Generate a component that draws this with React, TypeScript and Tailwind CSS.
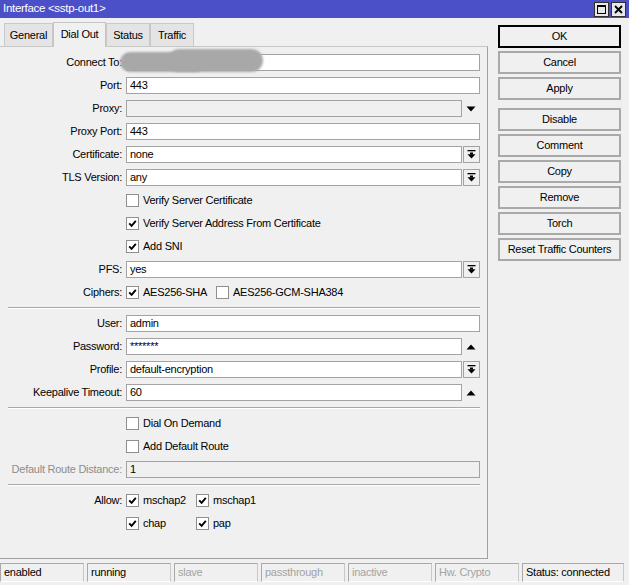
import React from 'react';

function Check({ checked }: { checked?: boolean }) {
  return (
    <span className="w-[13px] h-[13px] border border-[#8f8f8f] bg-white flex items-center justify-center shrink-0">
      {checked && (
        <svg width="9" height="9" viewBox="0 0 9 9">
          <path d="M1.2 4.4 L3.6 6.8 L7.8 1.8" stroke="#000" strokeWidth="1.9" fill="none" />
        </svg>
      )}
    </span>
  );
}

function Row({ label, dim, children }: { label?: string; dim?: boolean; children?: React.ReactNode }) {
  return (
    <div className="flex h-[17px] items-center">
      <div className={dim ? 'w-[122px] text-right text-[#8d8d8d] whitespace-nowrap' : 'w-[122px] text-right text-black whitespace-nowrap'}>
        {label}
      </div>
      <div className="ml-[4px] flex w-[354px] h-full items-center">{children}</div>
    </div>
  );
}

function Box({ value, disabled, className }: { value?: string; disabled?: boolean; className?: string }) {
  return (
    <div
      className={
        (disabled ? 'bg-[#f0f0f0] ' : 'bg-white ') +
        'h-[17px] border border-[#a3a3a3] px-[3px] leading-[15px] whitespace-nowrap overflow-hidden ' +
        (className ?? 'flex-1')
      }
    >
      {value}
    </div>
  );
}

function DropIcon() {
  return (
    <svg width="9" height="9" viewBox="0 0 9 9">
      <rect x="0.5" y="0" width="8" height="1.3" fill="#000" />
      <rect x="3" y="2.5" width="3" height="2" fill="#000" />
      <path d="M0.5 4.2 H8.5 L4.5 8.4 Z" fill="#000" />
    </svg>
  );
}

function Combo({ value }: { value: string }) {
  return (
    <>
      <Box value={value} />
      <div className="ml-[1px] w-[17px] h-[17px] border border-[#a3a3a3] bg-[#f0f0f0] flex items-center justify-center">
        <DropIcon />
      </div>
    </>
  );
}

function Tri({ up, value, disabled }: { up?: boolean; value?: string; disabled?: boolean }) {
  return (
    <>
      <Box value={value} disabled={disabled} className="w-[336px]" />
      <div className="w-[18px] h-[17px] flex items-center justify-center">
        <svg width="10" height="6" viewBox="0 0 10 6">
          {up ? <path d="M0.5 5.5 H9.5 L5 0.5 Z" fill="#000" /> : <path d="M0.5 0.5 H9.5 L5 5.5 Z" fill="#000" />}
        </svg>
      </div>
    </>
  );
}

function CheckText({ checked, text, className }: { checked?: boolean; text: string; className?: string }) {
  return (
    <div className={'flex items-center ' + (className ?? '')}>
      <Check checked={checked} />
      <span className="ml-[4px] whitespace-nowrap">{text}</span>
    </div>
  );
}

function Separator() {
  return <div className="my-[6px] ml-[8px] mr-[7px] h-[2px] border-t border-[#a8a8a8] border-b border-b-white" />;
}

function Btn({ children, primary, className }: { children: React.ReactNode; primary?: boolean; className?: string }) {
  return (
    <div
      className={
        (primary ? 'border-2 border-black ' : 'border-2 border-[#a9a9a9] ') +
        'h-[23px] w-[123px] flex items-center justify-center bg-[#f0f0f0] ' +
        (className ?? '')
      }
    >
      {children}
    </div>
  );
}

function Tab({ label, active, w }: { label: string; active?: boolean; w: string }) {
  return (
    <div
      className={
        active
          ? 'h-[25px] relative z-10 -mb-px bg-[#f0f0f0] border border-b-0 border-[#c4c4c4] flex items-center justify-center pb-[2px] ' + w
          : 'h-[23px] bg-[#e4e4e4] border border-b-0 border-[#c9c9c9] flex items-center justify-center ' + w
      }
    >
      {label}
    </div>
  );
}

function StatusCell({ text, dim, w }: { text: string; dim?: boolean; w: string }) {
  return (
    <div
      className={
        'h-[19px] border border-[#a8a8a8] border-b-white border-r-[#c8c8c8] pl-[3px] leading-[17px] whitespace-nowrap ' +
        (dim ? 'text-[#a3a3a3] ' : 'text-black ') +
        w
      }
    >
      {text}
    </div>
  );
}

export default function App() {
  return (
    <div className="w-[629px] h-[585px] bg-[#f0f0f0] flex flex-col text-[11px] tracking-[-0.25px] text-black font-['Liberation_Sans',Arial,sans-serif] overflow-hidden">
      {/* Title bar */}
      <div className="h-[18px] bg-[#4b4fc8] flex items-center justify-between pl-[3px] pr-[3px]">
        <span className="text-white text-[11.5px] tracking-[-0.3px]">Interface &lt;sstp-out1&gt;</span>
        <div className="flex gap-[2px]">
          <div className="w-[15px] h-[15px] bg-[#e8e8e8] border border-[#303030] flex items-center justify-center">
            <svg width="9" height="9" viewBox="0 0 9 9">
              <rect x="0.5" y="0.5" width="8" height="8" fill="none" stroke="#000" />
              <rect x="0" y="0" width="9" height="2" fill="#000" />
            </svg>
          </div>
          <div className="w-[15px] h-[15px] bg-[#e8e8e8] border border-[#303030] flex items-center justify-center">
            <svg width="9" height="9" viewBox="0 0 9 9">
              <path d="M1 1 L8 8 M8 1 L1 8" stroke="#000" strokeWidth="1.8" />
            </svg>
          </div>
        </div>
      </div>

      <div className="flex flex-1 min-h-0">
        {/* Left: tabs + panel */}
        <div className="w-[488px] flex flex-col">
          <div className="h-[28px] flex items-end pl-[4px]">
            <Tab label="General" w="w-[49px]" />
            <Tab label="Dial Out" active w="w-[53px]" />
            <Tab label="Status" w="w-[44px]" />
            <Tab label="Traffic" w="w-[44px]" />
          </div>
          <div className="relative flex-1 border-t border-t-[#c8c8c8] border-r border-r-[#a0a0a0] border-b border-b-[#a0a0a0] pt-[7px]">
            <div className="flex flex-col gap-[6px]">
              <Row label="Connect To:">
                <Box />
              </Row>
              <Row label="Port:">
                <Box value="443" />
              </Row>
              <Row label="Proxy:">
                <Tri disabled />
              </Row>
              <Row label="Proxy Port:">
                <Box value="443" />
              </Row>
              <Row label="Certificate:">
                <Combo value="none" />
              </Row>
              <Row label="TLS Version:">
                <Combo value="any" />
              </Row>
              <Row>
                <CheckText text="Verify Server Certificate" />
              </Row>
              <Row>
                <CheckText checked text="Verify Server Address From Certificate" />
              </Row>
              <Row>
                <CheckText checked text="Add SNI" />
              </Row>
              <Row label="PFS:">
                <Combo value="yes" />
              </Row>
              <Row label="Ciphers:">
                <CheckText checked text="AES256-SHA" className="w-[90px]" />
                <CheckText text="AES256-GCM-SHA384" />
              </Row>
            </div>
            <Separator />
            <div className="flex flex-col gap-[6px]">
              <Row label="User:">
                <Box value="admin" />
              </Row>
              <Row label="Password:">
                <Tri up value="*******" />
              </Row>
              <Row label="Profile:">
                <Combo value="default-encryption" />
              </Row>
              <Row label="Keepalive Timeout:">
                <Tri up value="60" />
              </Row>
            </div>
            <Separator />
            <div className="flex flex-col gap-[6px]">
              <Row>
                <CheckText text="Dial On Demand" />
              </Row>
              <Row>
                <CheckText text="Add Default Route" />
              </Row>
              <Row label="Default Route Distance:" dim>
                <Box value="1" disabled />
              </Row>
            </div>
            <Separator />
            <div className="flex flex-col gap-[6px]">
              <Row label="Allow:">
                <CheckText checked text="mschap2" className="w-[70px]" />
                <CheckText checked text="mschap1" />
              </Row>
              <Row>
                <CheckText checked text="chap" className="w-[70px]" />
                <CheckText checked text="pap" />
              </Row>
            </div>

            {/* blurred address */}
            <div className="absolute left-[120px] top-[5px] w-[86px] h-[20px] rounded-full bg-[#a8a8a8] blur-[1px]" />
            <div className="absolute left-[168px] top-[2px] w-[95px] h-[23px] rounded-full bg-[#a8a8a8] blur-[1px]" />
          </div>
        </div>

        {/* Right: buttons */}
        <div className="pl-[10px] pt-[7px] flex flex-col gap-[3px]">
          <Btn primary>OK</Btn>
          <Btn>Cancel</Btn>
          <Btn>Apply</Btn>
          <Btn className="mt-[5px]">Disable</Btn>
          <Btn>Comment</Btn>
          <Btn>Copy</Btn>
          <Btn>Remove</Btn>
          <Btn>Torch</Btn>
          <Btn>Reset Traffic Counters</Btn>
        </div>
      </div>

      {/* Status bar */}
      <div className="h-[26px] pt-[4px] flex gap-[3px]">
        <StatusCell text="enabled" w="w-[84px]" />
        <StatusCell text="running" w="w-[84px]" />
        <StatusCell text="slave" dim w="w-[84px]" />
        <StatusCell text="passthrough" dim w="w-[84px]" />
        <StatusCell text="inactive" dim w="w-[84px]" />
        <StatusCell text="Hw. Crypto" dim w="w-[84px]" />
        <StatusCell text="Status: connected" w="w-[102px]" />
      </div>
    </div>
  );
}
